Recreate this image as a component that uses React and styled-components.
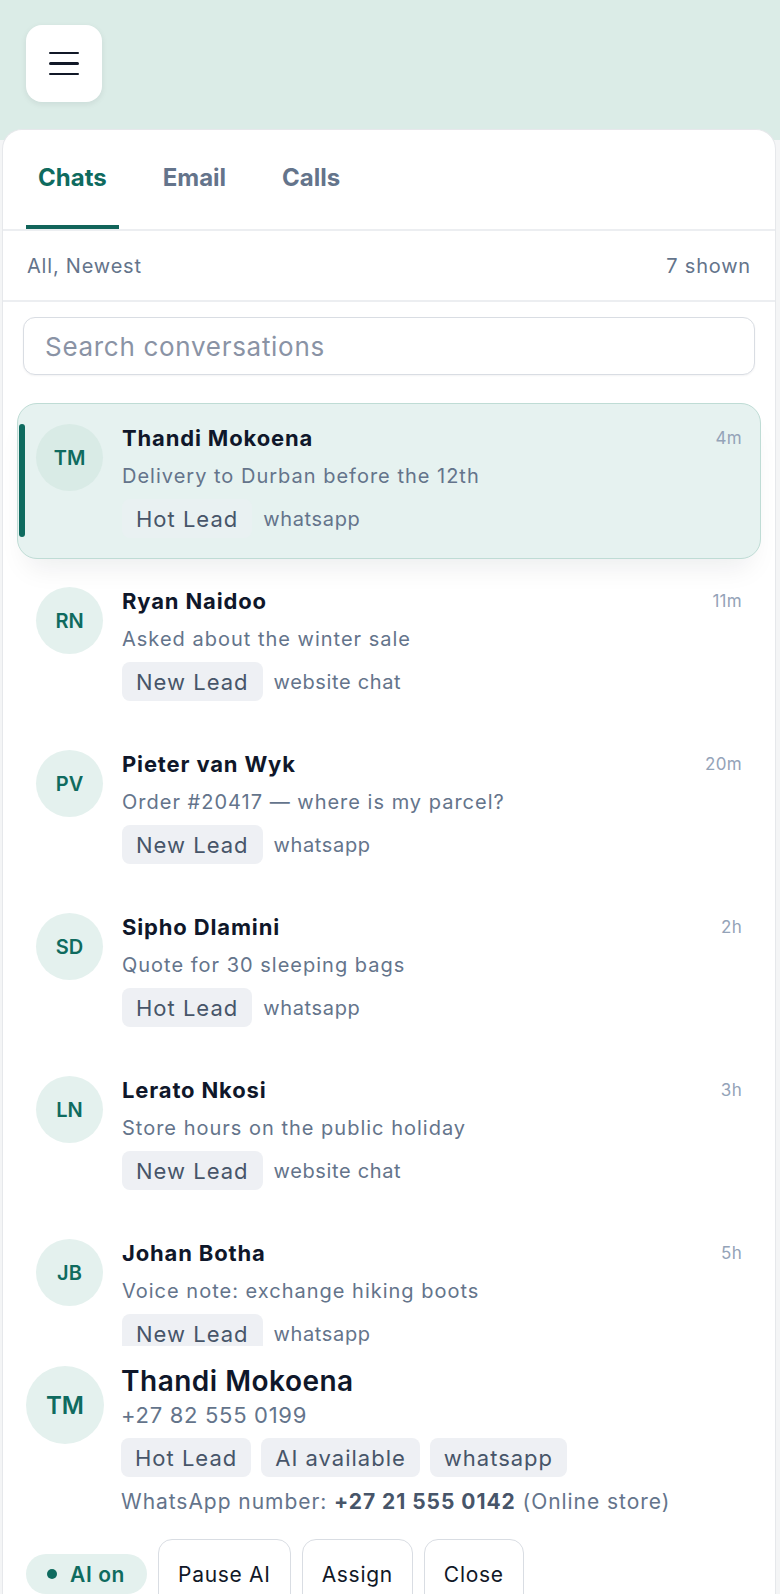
import React from 'react';
import styled, { createGlobalStyle } from 'styled-components';

const conversations = [
  { id: 1, initials: 'TM', name: 'Thandi Mokoena', message: 'Delivery to Durban before the 12th', tag: 'Hot Lead', source: 'whatsapp', time: '4m' },
  { id: 2, initials: 'RN', name: 'Ryan Naidoo', message: 'Asked about the winter sale', tag: 'New Lead', source: 'website chat', time: '11m' },
  { id: 3, initials: 'PV', name: 'Pieter van Wyk', message: 'Order #20417 — where is my parcel?', tag: 'New Lead', source: 'whatsapp', time: '20m' },
  { id: 4, initials: 'SD', name: 'Sipho Dlamini', message: 'Quote for 30 sleeping bags', tag: 'Hot Lead', source: 'whatsapp', time: '2h' },
  { id: 5, initials: 'LN', name: 'Lerato Nkosi', message: 'Store hours on the public holiday', tag: 'New Lead', source: 'website chat', time: '3h' },
  { id: 6, initials: 'JB', name: 'Johan Botha', message: 'Voice note: exchange hiking boots', tag: 'New Lead', source: 'whatsapp', time: '5h' },
];

function App() {
  const selectedId = 1;

  return (
    <Page>
      <GlobalStyle />
      <TopBar>
        <MenuButton aria-label="Menu">
          <MenuLine />
          <MenuLine />
          <MenuLine />
        </MenuButton>
      </TopBar>

      <Panel>
        <Tabs>
          <Tab active>Chats</Tab>
          <Tab>Email</Tab>
          <Tab>Calls</Tab>
        </Tabs>

        <FilterRow>
          <span>All, Newest</span>
          <span>7 shown</span>
        </FilterRow>

        <SearchWrap>
          <SearchInput placeholder="Search conversations" />
        </SearchWrap>

        <List>
          {conversations.map((item) => (
            <Row key={item.id} selected={item.id === selectedId}>
              {item.id === selectedId && <Accent />}
              <Avatar selected={item.id === selectedId}>{item.initials}</Avatar>
              <RowBody>
                <NameLine>
                  <Name>{item.name}</Name>
                  <Time>{item.time}</Time>
                </NameLine>
                <Message>{item.message}</Message>
                <TagLine>
                  <Tag soft={item.id === selectedId}>{item.tag}</Tag>
                  <Source>{item.source}</Source>
                </TagLine>
              </RowBody>
            </Row>
          ))}
        </List>

        <Detail>
          <DetailHead>
            <BigAvatar>TM</BigAvatar>
            <DetailBody>
              <DetailName>Thandi Mokoena</DetailName>
              <Phone>+27 82 555 0199</Phone>
              <DetailTags>
                <Tag>Hot Lead</Tag>
                <Tag>AI available</Tag>
                <Tag>whatsapp</Tag>
              </DetailTags>
              <Channel>
                WhatsApp number: <strong>+27 21 555 0142</strong> (Online store)
              </Channel>
            </DetailBody>
          </DetailHead>

          <Actions>
            <AiPill>
              <Dot />
              AI on
            </AiPill>
            <ActionButton>Pause AI</ActionButton>
            <ActionButton>Assign</ActionButton>
            <ActionButton>Close</ActionButton>
          </Actions>
        </Detail>
      </Panel>
    </Page>
  );
}

export default App;

// Styled Components

const GlobalStyle = createGlobalStyle`
  html, body {
    margin: 0;
    padding: 0;
  }
  body {
    font-family: Inter, "Noto Sans", Arial, sans-serif;
    background: #f4f5f6;
    overflow: hidden;
  }
  * {
    box-sizing: border-box;
  }
`;

const Page = styled.div`
  height: 1594px;
  overflow: hidden;
  background: linear-gradient(to bottom, #dbece7 0, #dbece7 140px, #f4f5f6 140px);
`;

const TopBar = styled.div`
  padding: 25px 26px 0;
  height: 129px;
`;

const MenuButton = styled.button`
  width: 76px;
  height: 77px;
  border: none;
  border-radius: 16px;
  background: #ffffff;
  box-shadow: 0 2px 6px rgba(15, 23, 42, 0.08);
  display: flex;
  flex-direction: column;
  align-items: center;
  justify-content: center;
  gap: 8px;
  padding: 0;
`;

const MenuLine = styled.span`
  display: block;
  width: 30px;
  height: 2.5px;
  border-radius: 2px;
  background: #111827;
`;

const Panel = styled.div`
  margin: 0 4px 0 2px;
  background: #ffffff;
  border: 1px solid #e6e8eb;
  border-bottom: none;
  border-radius: 20px 20px 0 0;
  height: 1465px;
  overflow: hidden;
`;

const Tabs = styled.div`
  display: flex;
  gap: 32px;
  padding: 0 23px;
  height: 101px;
  border-bottom: 2px solid #eceef1;
`;

const Tab = styled.div`
  display: flex;
  align-items: center;
  padding: 0 12px;
  font-size: 24px;
  font-weight: 700;
  color: ${(props) => (props.active ? '#0f6b5f' : '#64748b')};
  border-bottom: 4px solid ${(props) => (props.active ? '#11645a' : 'transparent')};
`;

const FilterRow = styled.div`
  display: flex;
  justify-content: space-between;
  align-items: center;
  height: 71px;
  padding: 0 24px;
  border-bottom: 2px solid #eceef1;
  font-size: 20px;
  letter-spacing: 0.8px;
  color: #64748b;
`;

const SearchWrap = styled.div`
  padding: 15px 20px 0;
`;

const SearchInput = styled.input`
  width: 100%;
  height: 58px;
  border: 1.5px solid #d9dde3;
  border-radius: 12px;
  padding: 0 21px;
  font-family: inherit;
  font-size: 26px;
  letter-spacing: 0.7px;
  color: #0f172a;
  outline: none;
  box-shadow: 0 1px 2px rgba(15, 23, 42, 0.05);

  &::placeholder {
    color: #8a93a5;
  }
`;

const List = styled.div`
  display: flex;
  flex-direction: column;
  gap: 7px;
  padding: 28px 14px 0;
  height: 971px;
  overflow: hidden;
`;

const Row = styled.div`
  position: relative;
  flex-shrink: 0;
  display: flex;
  gap: 19px;
  padding: 20px 18px;
  border: 1px solid ${(props) => (props.selected ? '#bfdcd5' : 'transparent')};
  border-radius: 20px;
  background: ${(props) => (props.selected ? '#e6f2f0' : 'transparent')};
  box-shadow: ${(props) => (props.selected ? '0 18px 28px -10px rgba(15, 23, 42, 0.08)' : 'none')};
`;

const Accent = styled.span`
  position: absolute;
  left: 1px;
  top: 20px;
  bottom: 21px;
  width: 6px;
  border-radius: 3px;
  background: #0f6b5f;
`;

const Avatar = styled.div`
  flex-shrink: 0;
  width: 67px;
  height: 67px;
  border-radius: 50%;
  background: ${(props) => (props.selected ? '#d9ebe6' : '#e4f1ee')};
  color: #0f6b5f;
  font-size: 20px;
  font-weight: 600;
  display: flex;
  align-items: center;
  justify-content: center;
`;

const RowBody = styled.div`
  flex: 1;
  min-width: 0;
  display: flex;
  flex-direction: column;
`;

const NameLine = styled.div`
  display: flex;
  justify-content: space-between;
  align-items: flex-start;
  height: 28px;
`;

const Name = styled.div`
  font-size: 22px;
  line-height: 28px;
  font-weight: 700;
  letter-spacing: 0.85px;
  color: #0f172a;
`;

const Time = styled.div`
  font-size: 17px;
  line-height: 28px;
  letter-spacing: 0.3px;
  color: #94a3b8;
`;

const Message = styled.div`
  margin-top: 11px;
  font-size: 20px;
  line-height: 26px;
  letter-spacing: 1px;
  color: #64748b;
  white-space: nowrap;
`;

const TagLine = styled.div`
  margin-top: 10px;
  display: flex;
  align-items: center;
  gap: 11px;
`;

const Tag = styled.span`
  display: inline-flex;
  align-items: center;
  height: 39px;
  padding: 0 14px;
  border-radius: 8px;
  background: ${(props) => (props.soft ? '#e9f1f2' : '#eef0f4')};
  font-size: 22px;
  letter-spacing: 1px;
  color: #475569;
  white-space: nowrap;
`;

const Source = styled.span`
  font-size: 20px;
  letter-spacing: 0.65px;
  color: #64748b;
`;

const Detail = styled.div`
  padding: 18px 23px 0;
`;

const DetailHead = styled.div`
  display: flex;
  gap: 17px;
`;

const BigAvatar = styled(Avatar)`
  width: 78px;
  height: 78px;
  margin-top: 2px;
  font-size: 24px;
`;

const DetailBody = styled.div`
  display: flex;
  flex-direction: column;
`;

const DetailName = styled.div`
  font-size: 28px;
  line-height: 34px;
  font-weight: 600;
  letter-spacing: 0.5px;
  color: #0f172a;
`;

const Phone = styled.div`
  margin-top: 3px;
  font-size: 22px;
  line-height: 28px;
  letter-spacing: 0.7px;
  color: #64748b;
`;

const DetailTags = styled.div`
  margin-top: 9px;
  display: flex;
  gap: 10px;
`;

const Channel = styled.div`
  margin-top: 11px;
  font-size: 21px;
  line-height: 28px;
  letter-spacing: 0.95px;
  color: #64748b;
  white-space: nowrap;

  strong {
    font-weight: 700;
    color: #475569;
  }
`;

const Actions = styled.div`
  margin-top: 23px;
  display: flex;
  align-items: center;
  gap: 11px;
`;

const AiPill = styled.div`
  display: flex;
  align-items: center;
  gap: 13px;
  height: 40px;
  padding: 0 22px 0 21px;
  border-radius: 20px;
  background: #e4f1ee;
  color: #0f6b5f;
  font-size: 21px;
  font-weight: 600;
  letter-spacing: 0.6px;
`;

const Dot = styled.span`
  width: 10px;
  height: 10px;
  border-radius: 50%;
  background: #0f6b5f;
`;

const ActionButton = styled.button`
  height: 70px;
  padding: 0 19px;
  border: 1.5px solid #d9dde3;
  border-radius: 14px;
  background: #ffffff;
  font-family: inherit;
  font-size: 21px;
  letter-spacing: 0.7px;
  color: #111827;
`;
